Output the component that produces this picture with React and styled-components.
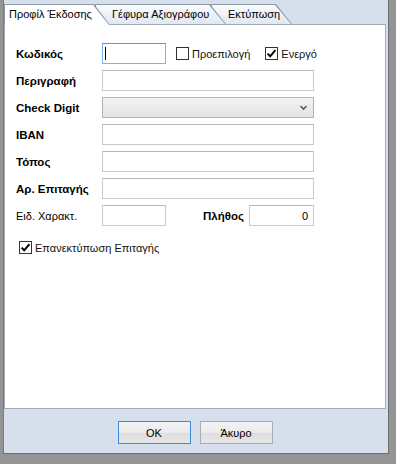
import React from "react";
import styled, { createGlobalStyle } from "styled-components";

const Global = createGlobalStyle`
  html, body { margin: 0; padding: 0; background: #8e8e8e; }
  * { box-sizing: border-box; }
`;

const Frame = styled.div`
  width: 396px;
  height: 464px;
  background: #949494;
  padding: 0 7px 10px 3px;
  display: flex;
`;

const Window = styled.div`
  flex: 1;
  display: flex;
  flex-direction: column;
  background: #d6e0ec;
  border-left: 1px solid #7a7a7a;
  border-right: 1px solid #6e6e6e;
  border-bottom: 1px solid #6e6e6e;
  padding-right: 2px;
  font-family: "Liberation Sans", Arial, sans-serif;
  font-size: 11px;
  color: #111;
`;

const TabBar = styled.div`
  display: flex;
  align-items: flex-start;
  height: 25px;
  padding-top: 4px;
  margin-bottom: -1px;
  position: relative;
  z-index: 2;
`;

const slant = "polygon(0 0, calc(100% - 16px) 0, 100% 100%, 0 100%)";

const Tab = styled.div`
  position: relative;
  z-index: ${(p) => p.$z};
  width: ${(p) => p.$w}px;
  height: ${(p) => (p.$active ? 21 : 20)}px;
  margin-left: ${(p) => (p.$first ? 0 : -15)}px;
  background: #8e99a7;
  clip-path: ${slant};
  padding: 1px 1px 0 1px;
  flex: none;
`;

const TabFace = styled.div`
  height: 100%;
  background: ${(p) =>
    p.$active ? "#ffffff" : "linear-gradient(#fbfcfe, #dfe7f1)"};
  clip-path: ${slant};
  padding-left: ${(p) => (p.$first ? 4 : 16)}px;
  line-height: 19px;
  white-space: nowrap;
  color: #000;
`;

const Panel = styled.div`
  height: 385px;
  background: #fff;
  border: 1px solid #a3abb5;
  padding: 18px 11px 0 11px;
  display: flex;
  flex-direction: column;
`;

const Form = styled.div`
  display: grid;
  grid-template-columns: 86px 212px;
  grid-auto-rows: 21px;
  row-gap: 6px;
  align-items: center;
`;

const Label = styled.div`
  font-weight: ${(p) => (p.$regular ? "normal" : "bold")};
  font-size: ${(p) => (p.$regular ? "11px" : "11.5px")};
  color: #000;
  white-space: nowrap;
`;

const Line = styled.div`
  display: flex;
  align-items: center;
  height: 21px;
  justify-content: ${(p) => (p.$spread ? "space-between" : "flex-start")};
`;

const Field = styled.div`
  width: ${(p) => (p.$w ? `${p.$w}px` : "100%")};
  height: 21px;
  flex: none;
  background: #fff;
  border: 1px solid ${(p) => (p.$focused ? "#7eb4ea" : "#c9cbcf")};
  border-top-color: ${(p) => (p.$focused ? "#569de5" : "#b3b6bb")};
  display: flex;
  align-items: center;
  justify-content: ${(p) => (p.$right ? "flex-end" : "flex-start")};
  padding: 0 ${(p) => (p.$right ? 5 : 2)}px;
  margin-left: ${(p) => p.$ml || 0}px;
  color: #000;
`;

const Caret = styled.span`
  width: 1px;
  height: 13px;
  background: #000;
`;

const Select = styled.div`
  width: 100%;
  height: 21px;
  border: 1px solid #b4b4b4;
  background: linear-gradient(#f2f2f2, #e3e3e3);
  display: flex;
  align-items: center;
  justify-content: flex-end;
  padding-right: 5px;
`;

const CheckItem = styled.div`
  display: flex;
  align-items: center;
  gap: 3px;
  margin-left: ${(p) => p.$ml}px;
  white-space: nowrap;
  color: #111;
`;

const Group = styled.div`
  display: flex;
  align-items: center;
  gap: 5px;
`;

const Box = styled.span`
  width: 13px;
  height: 13px;
  border: 1px solid #333;
  background: #fff;
  display: flex;
  align-items: center;
  justify-content: center;
  flex: none;
`;

const ReprintRow = styled.div`
  margin-top: 15px;
  padding-left: 3px;
  display: flex;
`;

const Footer = styled.div`
  flex: 1;
  display: flex;
  justify-content: center;
  align-items: flex-start;
  gap: 9px;
  padding-top: 12px;
`;

const Button = styled.button`
  width: 73px;
  height: 23px;
  border: 1px solid ${(p) => (p.$default ? "#3c8ad8" : "#acacac")};
  background: linear-gradient(#f3f3f3 0%, #ebebeb 50%, #dddddd 51%, #e6e6e6 100%);
  font-family: "Liberation Sans", Arial, sans-serif;
  font-size: 11px;
  color: #000;
  padding: 0;
  border-radius: 0;
`;

const Check = ({ checked, children, ml = 0 }) => (
  <CheckItem $ml={ml}>
    <Box>
      {checked && (
        <svg width="11" height="11" viewBox="0 0 11 11">
          <path d="M1.6 5.6 L4.2 8.3 L9.4 2.2" fill="none" stroke="#000" strokeWidth="2" />
        </svg>
      )}
    </Box>
    <span>{children}</span>
  </CheckItem>
);

const Chevron = () => (
  <svg width="9" height="6" viewBox="0 0 9 6">
    <path d="M1.5 1 L4.5 4 L7.5 1" fill="none" stroke="#5a5a5a" strokeWidth="1.6" />
  </svg>
);

const tabs = [
  { label: "Προφίλ Έκδοσης", w: 106, active: true },
  { label: "Γέφυρα Αξιογράφου", w: 131 },
  { label: "Εκτύπωση", w: 81 },
];

export default function App() {
  return (
    <>
      <Global />
      <Frame>
        <Window>
          <TabBar>
            {tabs.map((t, i) => (
              <Tab
                key={t.label}
                $w={t.w}
                $first={i === 0}
                $active={t.active}
                $z={t.active ? 10 : 5 - i}
              >
                <TabFace $active={t.active} $first={i === 0}>
                  {t.label}
                </TabFace>
              </Tab>
            ))}
          </TabBar>
          <Panel>
            <Form>
              <Label>Κωδικός</Label>
              <Line>
                <Field $w={64} $focused>
                  <Caret />
                </Field>
                <Check ml={10}>Προεπιλογή</Check>
                <Check ml={15} checked>
                  Ενεργό
                </Check>
              </Line>

              <Label>Περιγραφή</Label>
              <Field />

              <Label>Check Digit</Label>
              <Select>
                <Chevron />
              </Select>

              <Label>IBAN</Label>
              <Field />

              <Label>Τόπος</Label>
              <Field />

              <Label>Αρ. Επιταγής</Label>
              <Field />

              <Label $regular>Ειδ. Χαρακτ.</Label>
              <Line $spread>
                <Field $w={64} />
                <Group>
                  <Label>Πλήθος</Label>
                  <Field $w={65} $right>
                    0
                  </Field>
                </Group>
              </Line>
            </Form>
            <ReprintRow>
              <Check checked>Επανεκτύπωση Επιταγής</Check>
            </ReprintRow>
          </Panel>
          <Footer>
            <Button $default>OK</Button>
            <Button>Άκυρο</Button>
          </Footer>
        </Window>
      </Frame>
    </>
  );
}
